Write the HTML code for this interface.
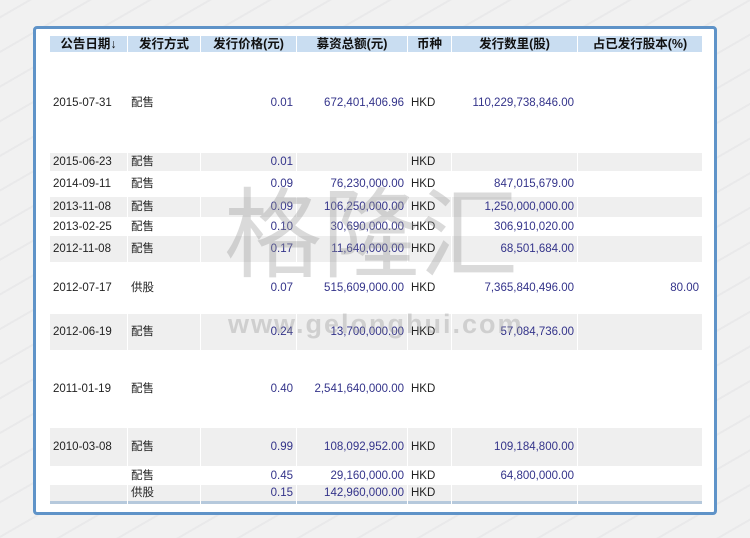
<!DOCTYPE html>
<html><head><meta charset="utf-8"><style>
body{margin:0;width:750px;height:538px;overflow:hidden;background:repeating-linear-gradient(150deg,#f1f1f1 0 14px,#e9e9ea 14px 16px,#f1f1f1 16px 30px);font-family:"Liberation Sans","Noto Sans CJK SC",sans-serif;position:relative}
.box{position:absolute;left:33px;top:26px;width:678px;height:483px;border:3px solid #5f93c8;border-radius:4px;background:#fff}
table{position:absolute;left:49px;top:36px;border-collapse:separate;border-spacing:1px 0;font-size:11.5px;color:#222}
th{background:#c9ddf1;height:16px;line-height:16px;font-size:12.5px;font-weight:bold;padding:0;color:#111;overflow:hidden}
th div{height:16px;overflow:hidden}
td{padding:0 3px;white-space:nowrap;line-height:14px}
tr.g td{background:#efefef}
.n{color:#33338a;text-align:right}
.last td{border-bottom:3px solid #b6c9dc}
.wm{position:absolute;left:224px;top:178px;font-size:98px;font-weight:normal;color:rgba(150,150,150,0.35);font-family:"Noto Sans CJK SC",sans-serif;line-height:1}
.wm2{position:absolute;left:228px;top:309px;font-size:27px;font-weight:bold;color:rgba(150,150,150,0.35);letter-spacing:2px}
</style></head><body>
<div class="box"></div>
<table>
<tr><th style="width:77px"><div>公告日期↓</div></th><th style="width:72px"><div>发行方式</div></th><th style="width:95px"><div>发行价格(元)</div></th><th style="width:110px"><div>募资总额(元)</div></th><th style="width:43px"><div>币种</div></th><th style="width:125px"><div>发行数里(股)</div></th><th style="width:124px"><div>占已发行股本(%)</div></th></tr>
<tr style="height:101px"><td>2015-07-31</td><td>配售</td><td class="n">0.01</td><td class="n">672,401,406.96</td><td>HKD</td><td class="n">110,229,738,846.00</td><td></td></tr>
<tr class="g" style="height:18px"><td>2015-06-23</td><td>配售</td><td class="n">0.01</td><td class="n"></td><td>HKD</td><td class="n"></td><td></td></tr>
<tr style="height:26px"><td>2014-09-11</td><td>配售</td><td class="n">0.09</td><td class="n">76,230,000.00</td><td>HKD</td><td class="n">847,015,679.00</td><td></td></tr>
<tr class="g" style="height:20px"><td>2013-11-08</td><td>配售</td><td class="n">0.09</td><td class="n">106,250,000.00</td><td>HKD</td><td class="n">1,250,000,000.00</td><td></td></tr>
<tr style="height:19px"><td>2013-02-25</td><td>配售</td><td class="n">0.10</td><td class="n">30,690,000.00</td><td>HKD</td><td class="n">306,910,020.00</td><td></td></tr>
<tr class="g" style="height:26px"><td>2012-11-08</td><td>配售</td><td class="n">0.17</td><td class="n">11,640,000.00</td><td>HKD</td><td class="n">68,501,684.00</td><td></td></tr>
<tr style="height:52px"><td>2012-07-17</td><td>供股</td><td class="n">0.07</td><td class="n">515,609,000.00</td><td>HKD</td><td class="n">7,365,840,496.00</td><td class="n">80.00</td></tr>
<tr class="g" style="height:36px"><td>2012-06-19</td><td>配售</td><td class="n">0.24</td><td class="n">13,700,000.00</td><td>HKD</td><td class="n">57,084,736.00</td><td></td></tr>
<tr style="height:78px"><td>2011-01-19</td><td>配售</td><td class="n">0.40</td><td class="n">2,541,640,000.00</td><td>HKD</td><td class="n"></td><td></td></tr>
<tr class="g" style="height:38px"><td>2010-03-08</td><td>配售</td><td class="n">0.99</td><td class="n">108,092,952.00</td><td>HKD</td><td class="n">109,184,800.00</td><td></td></tr>
<tr style="height:19px"><td></td><td>配售</td><td class="n">0.45</td><td class="n">29,160,000.00</td><td>HKD</td><td class="n">64,800,000.00</td><td></td></tr>
<tr class="g last" style="height:19px"><td></td><td>供股</td><td class="n">0.15</td><td class="n">142,960,000.00</td><td>HKD</td><td class="n"></td><td></td></tr>
</table>
<div class="wm">格隆汇</div>
<div class="wm2">www.gelonghui.com</div>
</body></html>
